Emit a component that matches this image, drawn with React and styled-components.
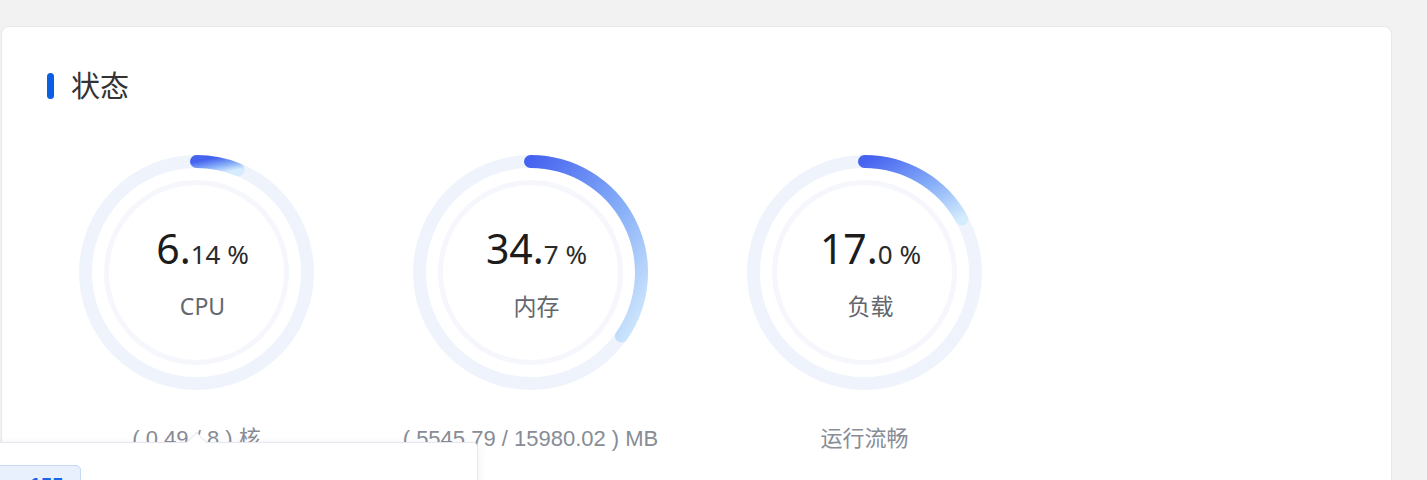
import styled, { createGlobalStyle } from "styled-components";

const GlobalStyle = createGlobalStyle`
  html, body {
    margin: 0;
    padding: 0;
    overflow: hidden;
    background: #f2f2f3;
    font-family: "Noto Sans", "Noto Sans CJK SC", sans-serif;
  }
`;

const gauges = [
  { id: "cpu", whole: "6.", frac: "14 %", percent: 6.14, label: "CPU", caption: "( 0.49 / 8 ) 核" },
  { id: "mem", whole: "34.", frac: "7 %", percent: 34.7, label: "内存", caption: "( 5545.79 / 15980.02 ) MB" },
  { id: "load", whole: "17.", frac: "0 %", percent: 17.0, label: "负载", caption: "运行流畅" },
];

const SIZE = 235;
const STROKE = 13;
const C = SIZE / 2;
const R = C - STROKE / 2;

const arcPath = (percent) => {
  const angle = (percent / 100) * Math.PI * 2;
  const x = C + R * Math.sin(angle);
  const y = C - R * Math.cos(angle);
  const large = percent > 50 ? 1 : 0;
  return `M ${C} ${C - R} A ${R} ${R} 0 ${large} 1 ${x.toFixed(2)} ${y.toFixed(2)}`;
};

const Ring = ({ id, percent }) => (
  <RingSvg width={SIZE} height={SIZE} viewBox={`0 0 ${SIZE} ${SIZE}`}>
    <defs>
      <linearGradient id={`grad-${id}`} x1="0" y1="0" x2="1" y2="1">
        <stop offset="0%" stopColor="#4663ef" />
        <stop offset="55%" stopColor="#88b0f8" />
        <stop offset="100%" stopColor="#d5ecfd" />
      </linearGradient>
    </defs>
    <circle cx={C} cy={C} r={R} fill="none" stroke="#eff4fc" strokeWidth={STROKE} />
    <circle cx={C} cy={C} r={90} fill="none" stroke="#f5f7fd" strokeWidth={5} />
    <path
      d={arcPath(percent)}
      fill="none"
      stroke={`url(#grad-${id})`}
      strokeWidth={STROKE}
      strokeLinecap="round"
    />
  </RingSvg>
);

export default function App() {
  return (
    <Page>
      <GlobalStyle />
      <Card>
        <Header>
          <Bar />
          <Title>状态</Title>
        </Header>
        <Row>
          {gauges.map((g) => (
            <Gauge key={g.id}>
              <Dial>
                <Ring id={g.id} percent={g.percent} />
                <Center>
                  <Value>
                    <Big>{g.whole}</Big>
                    <Small>{g.frac}</Small>
                  </Value>
                  <Label>{g.label}</Label>
                </Center>
              </Dial>
              <Caption>{g.caption}</Caption>
            </Gauge>
          ))}
        </Row>
      </Card>
      <Popover>
        <Chip>155</Chip>
      </Popover>
    </Page>
  );
}

const Page = styled.div`
  position: relative;
  padding: 26px 0 0 1px;
  height: 480px;
  box-sizing: border-box;
`;

const Card = styled.div`
  width: 1391px;
  box-sizing: border-box;
  background: #ffffff;
  border: 1px solid #e7e9ef;
  border-radius: 8px;
  padding: 44px 45px 60px;
`;

const Header = styled.div`
  display: flex;
  align-items: center;
  gap: 17px;
  height: 30px;
`;

const Bar = styled.span`
  width: 7px;
  height: 26px;
  border-radius: 4px;
  background: #0b5fe5;
`;

const Title = styled.h2`
  margin: 0;
  font-size: 29px;
  font-weight: 400;
  line-height: 30px;
  color: #333333;
`;

const Row = styled.div`
  display: flex;
  gap: 99px;
  margin-top: 54px;
  padding-left: 32px;
`;

const Gauge = styled.div`
  width: ${SIZE}px;
  display: flex;
  flex-direction: column;
  align-items: center;
`;

const Dial = styled.div`
  position: relative;
  width: ${SIZE}px;
  height: ${SIZE}px;
`;

const RingSvg = styled.svg`
  position: absolute;
  inset: 0;
  display: block;
`;

const Center = styled.div`
  position: relative;
  display: flex;
  flex-direction: column;
  align-items: center;
  padding: 69px 0 0 12px;
`;

const Value = styled.div`
  font-size: 41px;
  line-height: 48px;
  color: #1c1c1c;
  white-space: nowrap;
`;

const Big = styled.span`
  font-size: 41px;
`;

const Small = styled.span`
  font-size: 26px;
  color: #2a2a2a;
`;

const Label = styled.div`
  margin-top: 12px;
  font-size: 23px;
  line-height: 32px;
  color: #63676e;
`;

const Caption = styled.div`
  margin-top: 35px;
  font-family: "Liberation Sans", "Noto Sans CJK SC", sans-serif;
  font-size: 22px;
  line-height: 28px;
  color: #878c95;
  white-space: nowrap;
`;

const Popover = styled.div`
  position: absolute;
  top: 442px;
  left: -86px;
  width: 564px;
  height: 120px;
  box-sizing: border-box;
  background: #ffffff;
  border: 1px solid #e4e7ed;
  border-radius: 5px;
  box-shadow: 0 2px 12px rgba(0, 0, 0, 0.06);
  padding: 22px 0 0 76px;

  &::before {
    content: "";
    position: absolute;
    top: -8px;
    left: 274px;
    width: 14px;
    height: 14px;
    background: #ffffff;
    border-top: 1px solid #e4e7ed;
    border-left: 1px solid #e4e7ed;
    transform: rotate(45deg);
  }
`;

const Chip = styled.button`
  height: 41px;
  padding: 0 17px 0 38px;
  border: 1px solid #c7d9f8;
  border-radius: 5px;
  background: #e8f0fe;
  color: #1766e8;
  font-family: "Liberation Sans", sans-serif;
  font-size: 20px;
  font-weight: 700;
`;
